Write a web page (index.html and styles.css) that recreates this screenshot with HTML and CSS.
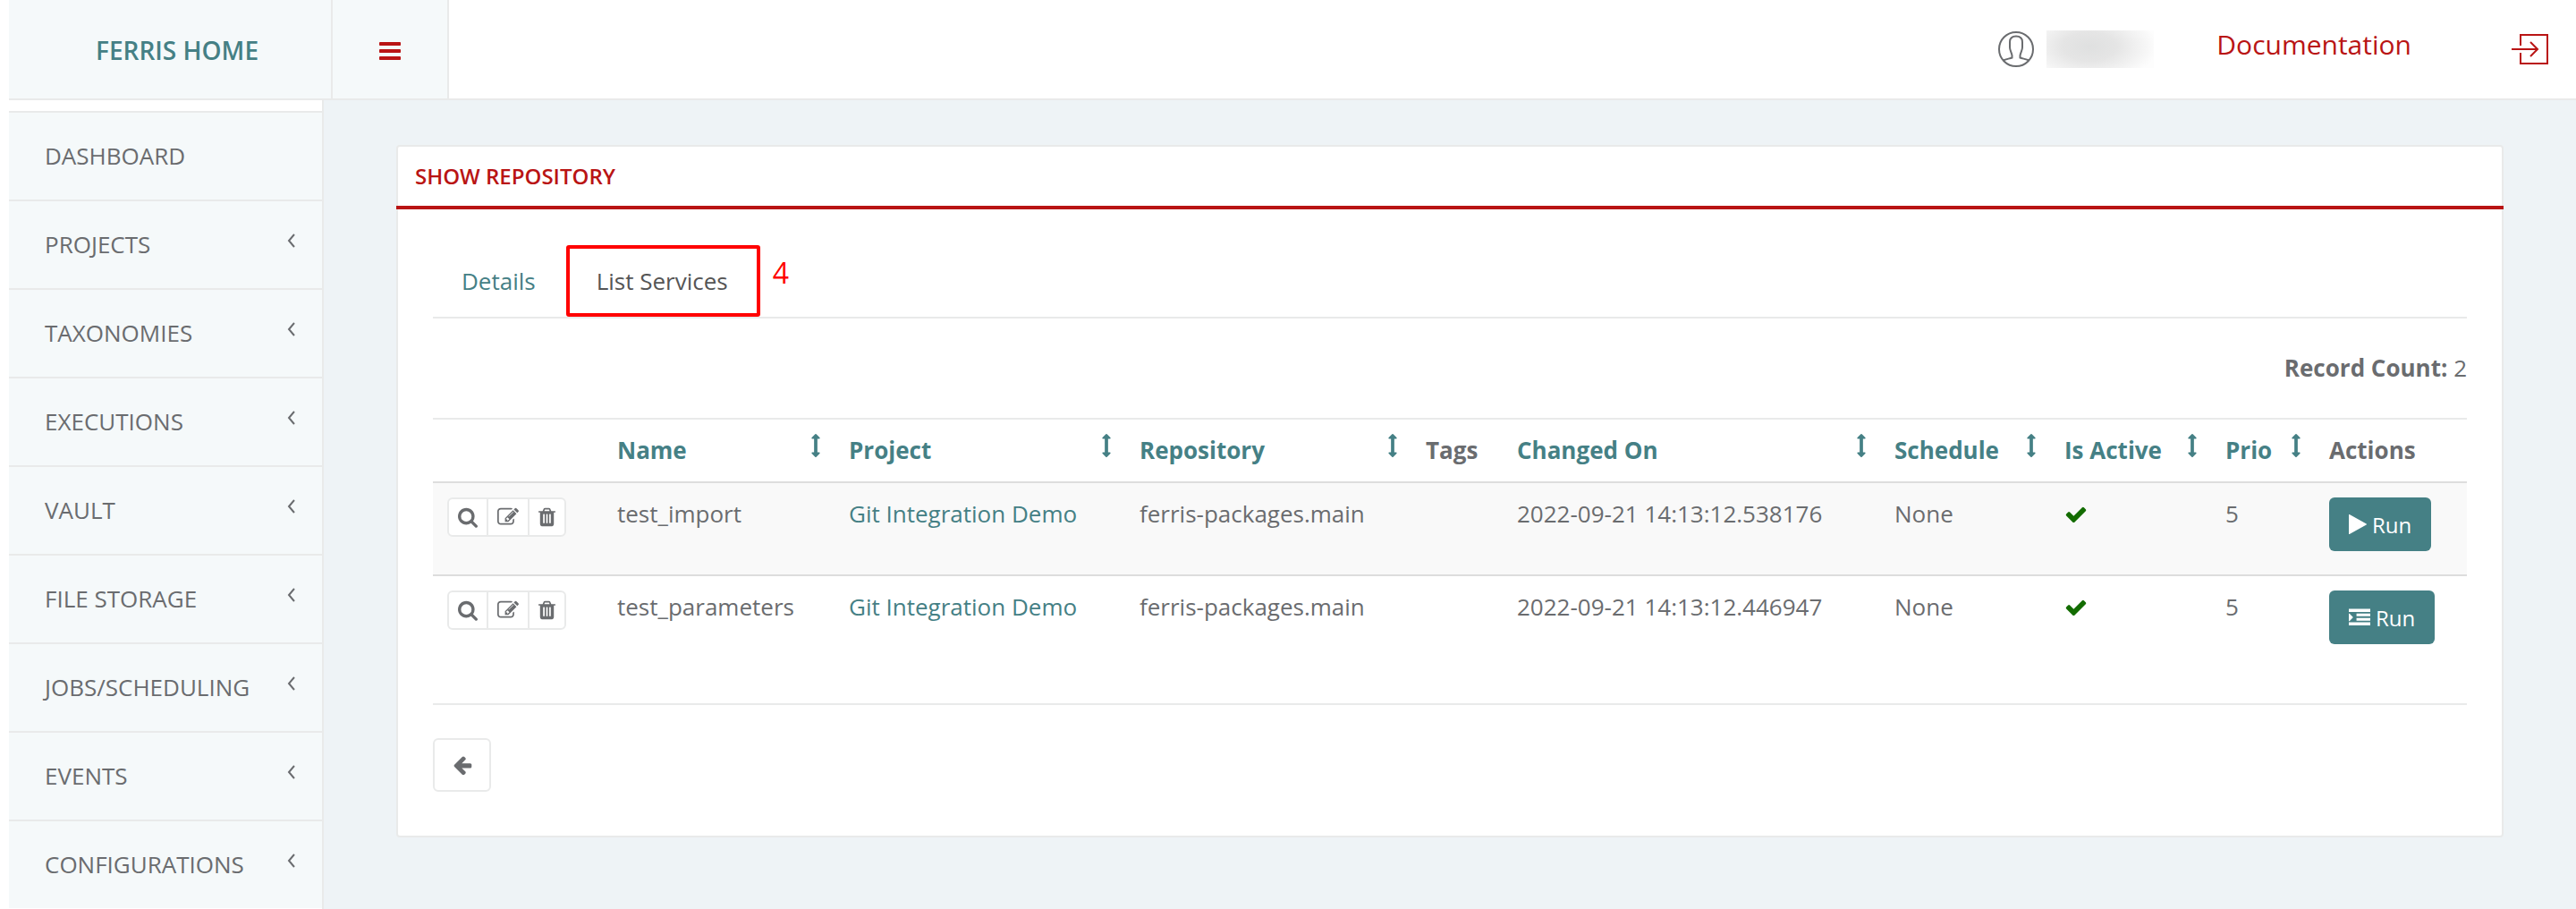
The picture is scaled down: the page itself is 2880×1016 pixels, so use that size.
FILE: index.html
```html
<!DOCTYPE html>
<html lang="en">
<head>
<meta charset="utf-8">
<meta name="viewport" content="width=device-width, initial-scale=1">
<title>Show Repository</title>
<link rel="stylesheet" href="styles.css">
</head>
<body>
<svg class="sprite" aria-hidden="true">
  <symbol id="i-bars" viewBox="128 0 1536 1792"><path d="M1664 1344v128q0 26-19 45t-45 19h-1408q-26 0-45-19t-19-45v-128q0-26 19-45t45-19h1408q26 0 45 19t19 45zm0-512v128q0 26-19 45t-45 19h-1408q-26 0-45-19t-19-45v-128q0-26 19-45t45-19h1408q26 0 45 19t19 45zm0-512v128q0 26-19 45t-45 19h-1408q-26 0-45-19t-19-45v-128q0-26 19-45t45-19h1408q26 0 45 19t19 45z"/></symbol>
  <symbol id="i-search" viewBox="64 0 1664 1792"><path d="M1216 832q0-185-131.500-316.500t-316.500-131.500-316.500 131.500-131.500 316.500 131.500 316.500 316.500 131.500 316.500-131.500 131.500-316.500zm512 832q0 52-38 90t-90 38q-54 0-90-38l-343-342q-179 124-399 124-143 0-273.500-55.500t-225-150-150-225-55.500-273.500 55.500-273.500 150-225 225-150 273.500-55.500 273.500 55.500 225 150 150 225 55.500 273.500q0 220-124 399l343 343q37 37 37 90z"/></symbol>
  <symbol id="i-edit" viewBox="0 0 1792 1792"><path d="M888 1184l116-116-152-152-116 116v56h96v96h56zm440-720q-16-16-33 1l-350 350q-17 17-1 33t33-1l350-350q17-17 1-33zm80 594v190q0 119-84.500 203.500t-203.500 84.500h-832q-119 0-203.500-84.500t-84.500-203.500v-832q0-119 84.500-203.500t203.500-84.500h832q63 0 117 25 15 7 18 23 3 17-9 29l-49 49q-14 14-32 8-23-6-45-6h-832q-66 0-113 47t-47 113v832q0 66 47 113t113 47h832q66 0 113-47t47-113v-126q0-13 9-22l64-64q15-15 35-7t20 29zm-96-738l288 288-672 672h-288v-288zm444 132l-92 92-288-288 92-92q28-28 68-28t68 28l152 152q28 28 28 68t-28 68z"/></symbol>
  <symbol id="i-trash" viewBox="192 0 1408 1792"><path d="M704 1376v-704q0-14-9-23t-23-9h-64q-14 0-23 9t-9 23v704q0 14 9 23t23 9h64q14 0 23-9t9-23zm256 0v-704q0-14-9-23t-23-9h-64q-14 0-23 9t-9 23v704q0 14 9 23t23 9h64q14 0 23-9t9-23zm256 0v-704q0-14-9-23t-23-9h-64q-14 0-23 9t-9 23v704q0 14 9 23t23 9h64q14 0 23-9t9-23zm-544-992h448l-48-117q-7-9-17-11h-317q-10 2-17 11zm928 32v64q0 14-9 23t-23 9h-96v948q0 83-47 143.500t-113 60.500h-832q-66 0-113-58.500t-47-141.500v-952h-96q-14 0-23-9t-9-23v-64q0-14 9-23t23-9h309l70-167q15-37 54-63t79-26h320q40 0 79 26t54 63l70 167h309q14 0 23 9t9 23z"/></symbol>
  <symbol id="i-sort" viewBox="576 0 640 1792"><path d="M1216 320q0 26-19 45t-45 19h-128v1024h128q26 0 45 19t19 45-19 45l-256 256q-19 19-45 19t-45-19l-256-256q-19-19-19-45t19-45 45-19h128v-1024h-128q-26 0-45-19t-19-45 19-45l256-256q19-19 45-19t45 19l256 256q19 19 19 45z"/></symbol>
  <symbol id="i-check" viewBox="0 0 1792 1792"><path d="M1671 566q0 40-28 68l-724 724-136 136q-28 28-68 28t-68-28l-136-136-362-362q-28-28-28-68t28-68l136-136q28-28 68-28t68 28l294 295 656-657q28-28 68-28t68 28l136 136q28 28 28 68z"/></symbol>
  <symbol id="i-play" viewBox="192 0 1408 1792"><path d="M1576 927l-1328 738q-23 13-39.500 3t-16.500-36v-1472q0-26 16.500-36t39.500 3l1328 738q23 13 23 31t-23 31z"/></symbol>
  <symbol id="i-indent" viewBox="0 0 1792 1792"><path d="M352 896q0 14-9 23l-288 288q-9 9-23 9-13 0-22.500-9.500t-9.500-22.500v-576q0-13 9.500-22.500t22.500-9.500q14 0 23 9l288 288q9 9 9 23zM0 1312h1792v256h-1792zM640 960h1152v224h-1152zM640 576h1152v224h-1152zM0 192h1792v256h-1792z"/></symbol>
  <symbol id="i-left" viewBox="0 0 1792 1792"><path d="M1664 896v128q0 53-32.500 90.500t-84.500 37.500h-704l293 294q38 36 38 90t-38 90l-75 76q-37 37-90 37-52 0-91-37l-651-652q-37-37-37-90 0-52 37-91l651-650q38-38 91-38 52 0 90 38l75 74q38 38 38 91t-38 91l-293 293h704q52 0 84.500 37.500t32.500 90.500z"/></symbol>
</svg>

<header class="topbar">
  <a class="brand" href="#">FERRIS HOME</a>
  <button class="menu-toggle" type="button" aria-label="Toggle menu"><svg class="icon-bars"><use href="#i-bars"/></svg></button>
  <div class="topbar-right">
    <a class="user" href="#" aria-label="Account">
      <svg class="icon-user" viewBox="0 0 40 40"><circle cx="20" cy="20" r="19"/><path d="M5.500 32.500C9 31 13 30.500 15.500 29.500V27C15 24 13 21 13 18V12C13 7.500 16 5.500 20 5.500S27 7.500 27 12v6c0 3-2 6-2.500 9v2.500c2.500 1 6.500 1.500 10 3"/></svg>
      <span class="user-name"></span>
    </a>
    <a class="docs" href="#">Documentation</a>
    <a class="logout" href="#" aria-label="Log out"><svg class="icon-logout" viewBox="0 0 42 34"><path d="M10 13V1h30v32h-30V21M0 17h29M21 9l8 8-8 8"/></svg></a>
  </div>
</header>

<div class="layout">
  <nav class="sidebar" aria-label="Main">
    <a class="nav-item" href="#">DASHBOARD</a>
    <a class="nav-item" href="#">PROJECTS<svg class="chevron" viewBox="0 0 10 16"><path d="M8 1L2 8l6 7"/></svg></a>
    <a class="nav-item" href="#">TAXONOMIES<svg class="chevron" viewBox="0 0 10 16"><path d="M8 1L2 8l6 7"/></svg></a>
    <a class="nav-item" href="#">EXECUTIONS<svg class="chevron" viewBox="0 0 10 16"><path d="M8 1L2 8l6 7"/></svg></a>
    <a class="nav-item" href="#">VAULT<svg class="chevron" viewBox="0 0 10 16"><path d="M8 1L2 8l6 7"/></svg></a>
    <a class="nav-item" href="#">FILE STORAGE<svg class="chevron" viewBox="0 0 10 16"><path d="M8 1L2 8l6 7"/></svg></a>
    <a class="nav-item" href="#">JOBS/SCHEDULING<svg class="chevron" viewBox="0 0 10 16"><path d="M8 1L2 8l6 7"/></svg></a>
    <a class="nav-item" href="#">EVENTS<svg class="chevron" viewBox="0 0 10 16"><path d="M8 1L2 8l6 7"/></svg></a>
    <a class="nav-item" href="#">CONFIGURATIONS<svg class="chevron" viewBox="0 0 10 16"><path d="M8 1L2 8l6 7"/></svg></a>
  </nav>

  <main class="content">
    <section class="panel">
      <h1 class="panel-title">SHOW REPOSITORY</h1>
      <div class="panel-body">
        <div class="tabs">
          <a class="tab" href="#">Details</a>
          <a class="tab tab-active" href="#" aria-current="page">List Services<span class="marker"></span><span class="marker-label">4</span></a>
        </div>
        <p class="count"><strong>Record Count:</strong> 2</p>
        <table class="services">
          <colgroup>
            <col class="c-tools"><col class="c-name"><col class="c-project"><col class="c-repo"><col class="c-tags"><col class="c-changed"><col class="c-schedule"><col class="c-active"><col class="c-prio"><col class="c-actions">
          </colgroup>
          <thead>
            <tr>
              <th></th>
              <th><a class="sort" href="#">Name<svg class="icon-sort"><use href="#i-sort"/></svg></a></th>
              <th><a class="sort" href="#">Project<svg class="icon-sort"><use href="#i-sort"/></svg></a></th>
              <th><a class="sort" href="#">Repository<svg class="icon-sort"><use href="#i-sort"/></svg></a></th>
              <th>Tags</th>
              <th><a class="sort" href="#">Changed On<svg class="icon-sort"><use href="#i-sort"/></svg></a></th>
              <th><a class="sort" href="#">Schedule<svg class="icon-sort"><use href="#i-sort"/></svg></a></th>
              <th><a class="sort" href="#">Is Active<svg class="icon-sort"><use href="#i-sort"/></svg></a></th>
              <th><a class="sort" href="#">Prio<svg class="icon-sort"><use href="#i-sort"/></svg></a></th>
              <th>Actions</th>
            </tr>
          </thead>
          <tbody>
            <tr>
              <td><div class="tools"><button type="button" aria-label="Show"><svg class="icon-search"><use href="#i-search"/></svg></button><button type="button" aria-label="Edit"><svg class="icon"><use href="#i-edit"/></svg></button><button type="button" aria-label="Delete"><svg class="icon-trash"><use href="#i-trash"/></svg></button></div></td>
              <td>test_import</td>
              <td><a class="link" href="#">Git Integration Demo</a></td>
              <td>ferris-packages.main</td>
              <td></td>
              <td>2022-09-21 14:13:12.538176</td>
              <td>None</td>
              <td><svg class="icon-check"><use href="#i-check"/></svg></td>
              <td>5</td>
              <td><button class="run" type="button"><svg class="icon-play"><use href="#i-play"/></svg>Run</button></td>
            </tr>
            <tr>
              <td><div class="tools"><button type="button" aria-label="Show"><svg class="icon-search"><use href="#i-search"/></svg></button><button type="button" aria-label="Edit"><svg class="icon"><use href="#i-edit"/></svg></button><button type="button" aria-label="Delete"><svg class="icon-trash"><use href="#i-trash"/></svg></button></div></td>
              <td>test_parameters</td>
              <td><a class="link" href="#">Git Integration Demo</a></td>
              <td>ferris-packages.main</td>
              <td></td>
              <td>2022-09-21 14:13:12.446947</td>
              <td>None</td>
              <td><svg class="icon-check"><use href="#i-check"/></svg></td>
              <td>5</td>
              <td><button class="run" type="button"><svg class="icon"><use href="#i-indent"/></svg>Run</button></td>
            </tr>
          </tbody>
        </table>
        <hr class="rule">
        <button class="back" type="button" aria-label="Back"><svg class="icon"><use href="#i-left"/></svg></button>
      </div>
    </section>
  </main>
</div>
</body>
</html>
```

FILE: styles.css
```css
:root {
  --teal: #458085;
  --red: #b91414;
  --text: #6a6c6f;
  --line: #e9eaea;
  --tint: #f5f9fa;
}

* {
  box-sizing: border-box;
}

body {
  margin: 0;
  padding-left: 10px;
  min-height: 100vh;
  display: flex;
  flex-direction: column;
  background: #fff;
  color: var(--text);
  font-family: "Open Sans", "Noto Sans", sans-serif;
  font-size: 26px;
  line-height: 37px;
}

a {
  color: inherit;
  text-decoration: none;
}

button {
  font: inherit;
  color: inherit;
  cursor: pointer;
}

svg {
  display: block;
  fill: currentColor;
}

.sprite {
  position: absolute;
  width: 0;
  height: 0;
}

.icon {
  width: 24px;
  height: 24px;
}

.icon-search {
  width: 22px;
  height: 24px;
}

.icon-trash {
  width: 19px;
  height: 24px;
}

/* Top bar */
.topbar {
  display: flex;
  height: 112px;
  border-bottom: 2px solid var(--line);
}

.brand {
  display: flex;
  align-items: center;
  justify-content: center;
  width: 362px;
  border-right: 2px solid var(--line);
  background: var(--tint);
  color: var(--teal);
  font-size: 28px;
  font-weight: 600;
  padding: 2px 0 0 16px;
}

.menu-toggle {
  display: flex;
  align-items: center;
  justify-content: center;
  width: 130px;
  padding: 4px 0 0;
  border: 0;
  border-right: 2px solid var(--line);
  background: var(--tint);
  color: var(--red);
}

.icon-bars {
  width: 24px;
  height: 28px;
}

.topbar-right {
  display: flex;
  align-items: center;
  margin-left: auto;
  padding-right: 30px;
  color: var(--red);
}

.user {
  display: flex;
  align-items: center;
  gap: 14px;
  margin-right: 70px;
  color: var(--text);
}

.icon-user {
  width: 40px;
  height: 40px;
  fill: none;
  stroke: currentColor;
  stroke-width: 2;
}

.user-name {
  width: 120px;
  height: 42px;
  background: radial-gradient(ellipse 76px 40px at 48px 18px, #dfe0e0, #e5e5e5 40%, #f3f3f3 75%, #fdfdfd);
}

.docs {
  margin-right: 112px;
  padding-bottom: 12px;
  font-size: 30px;
}

.icon-logout {
  width: 42px;
  height: 34px;
  fill: none;
  stroke: currentColor;
  stroke-width: 2;
}

.layout {
  flex: 1;
  display: flex;
}

/* Side navigation */
.sidebar {
  flex: none;
  width: 352px;
  padding-top: 12px;
  border-right: 2px solid var(--line);
}

.nav-item {
  display: flex;
  justify-content: space-between;
  padding: 30px 29px 30px 40px;
  border-top: 2px solid var(--line);
  background: var(--tint);
}

.chevron {
  width: 10px;
  height: 16px;
  margin-top: 6px;
  fill: none;
  stroke: currentColor;
  stroke-width: 2;
}

/* Page */
.content {
  flex: 1;
  min-width: 0;
  padding: 50px 81px 80px;
  background: #eef3f6;
}

.panel {
  border: 2px solid var(--line);
  border-radius: 4px;
  background: #fff;
}

.panel-title {
  margin: 0 -2px;
  padding: 14px 21px 15px;
  border-bottom: 4px solid var(--red);
  color: var(--red);
  font-size: 24px;
  font-weight: 600;
  line-height: 37px;
}

.panel-body {
  padding: 42px 39px 49px;
}

.tabs {
  display: flex;
  gap: 4px;
  border-bottom: 2px solid var(--line);
}

.tab {
  padding: 20px 32px 21px;
  color: var(--teal);
}

.tab-active {
  position: relative;
  color: #555;
}

.marker {
  position: absolute;
  inset: -2px -4px 0 -2px;
  border: 4px solid #f00;
  border-radius: 3px;
}

.marker-label {
  position: absolute;
  top: 10px;
  left: calc(100% + 18px);
  color: #f00;
  font-size: 32px;
}

.count {
  margin: 37px 0;
  text-align: right;
}

.services {
  width: 100%;
  table-layout: fixed;
  border-collapse: separate;
  border-spacing: 0;
}

.c-tools,
.c-schedule { width: 190px; }
.c-name { width: 259px; }
.c-project { width: 325px; }
.c-repo { width: 320px; }
.c-tags { width: 102px; }
.c-changed { width: 422px; }
.c-active { width: 180px; }
.c-prio { width: 116px; }
.c-actions { width: 170px; }

.services th,
.services td {
  padding: 16px;
  text-align: left;
  vertical-align: top;
  white-space: nowrap;
}

.services th {
  border-top: 2px solid var(--line);
  border-bottom: 2px solid #ddd;
  font-weight: 700;
}

.services td {
  padding-bottom: 26px;
}

.services tbody tr:first-child td {
  background: #f9f9f9;
  border-bottom: 2px solid #ddd;
}

.sort {
  display: flex;
  justify-content: space-between;
  color: var(--teal);
}

.icon-sort {
  width: 10px;
  height: 26px;
}

.link {
  color: var(--teal);
}

.tools {
  display: inline-flex;
  border: 2px solid var(--line);
  border-radius: 6px;
  background: #fff;
}

.tools button {
  display: flex;
  align-items: center;
  justify-content: center;
  height: 40px;
  padding: 0 10px;
  border: 0;
  background: none;
}

.tools button + button {
  border-left: 2px solid var(--line);
}

.icon-check {
  width: 26px;
  height: 26px;
  margin-top: 6px;
  color: #136c00;
}

.run {
  display: flex;
  align-items: center;
  gap: 6px;
  height: 60px;
  padding: 0 22px;
  border: 0;
  border-radius: 6px;
  background: var(--teal);
  color: #fff;
  font-size: 24px;
}

.icon-play {
  width: 20px;
  height: 26px;
}

.rule {
  margin: 40px 0 37px;
  border: 0;
  border-top: 2px solid var(--line);
}

.back {
  display: flex;
  align-items: center;
  justify-content: center;
  width: 65px;
  height: 60px;
  padding: 0;
  border: 2px solid var(--line);
  border-radius: 6px;
  background: #fff;
}
```
